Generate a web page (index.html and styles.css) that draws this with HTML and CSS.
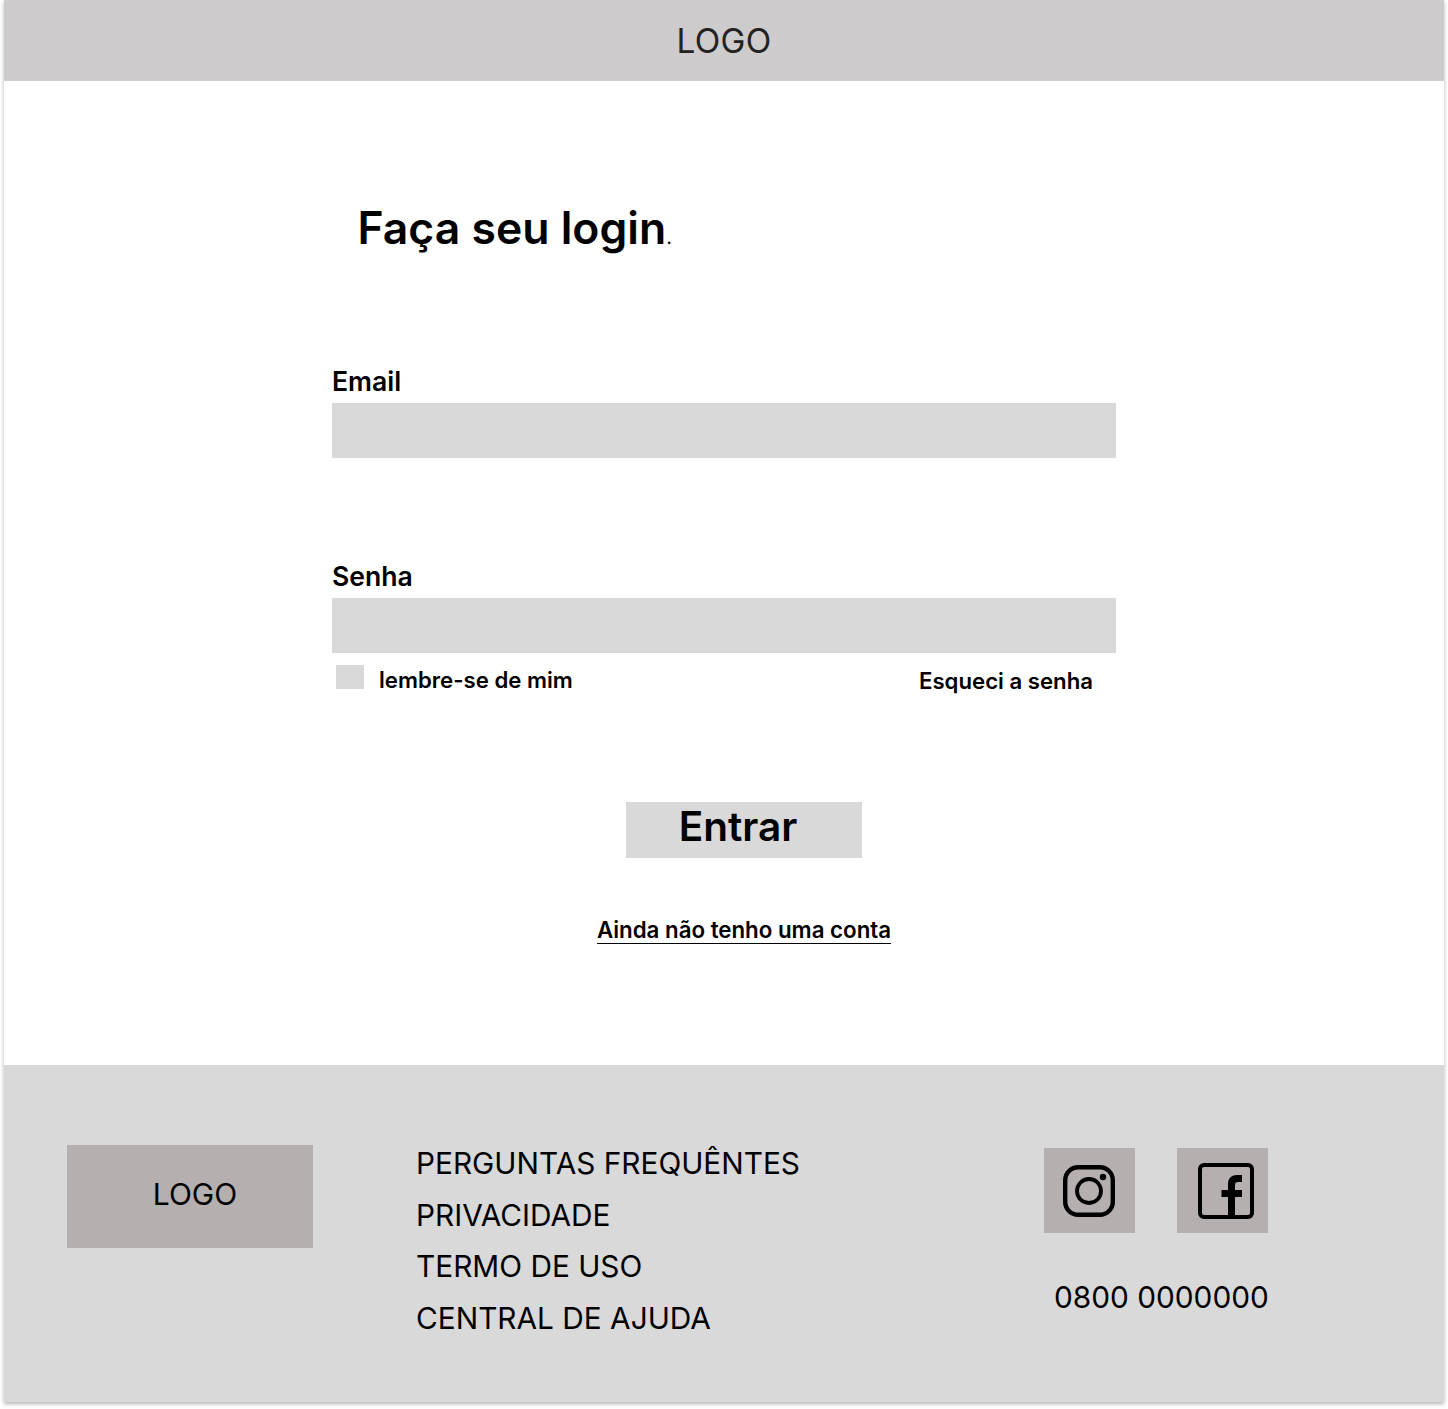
FILE: index.html
```html
<!DOCTYPE html>
<html lang="pt-BR">
<head>
    <meta charset="UTF-8">
    <title>Login</title>
    <link rel="stylesheet" href="styles.css">
</head>
<body>
    <div class="page">
        <header class="topbar">LOGO</header>

        <main class="content">
            <h1 class="title">Faça seu login<span class="dot">.</span></h1>

            <div class="field">
                <label class="field-label">Email</label>
                <div class="input"></div>
            </div>

            <div class="field field-senha">
                <label class="field-label">Senha</label>
                <div class="input"></div>
            </div>

            <div class="options">
                <div class="remember">
                    <span class="check"></span>
                    <span class="remember-text">lembre-se de mim</span>
                </div>
                <a class="forgot">Esqueci a senha</a>
            </div>

            <div class="actions">
                <button class="btn">Entrar</button>
                <a class="signup">Ainda não tenho uma conta</a>
            </div>
        </main>

        <footer class="footer">
            <div class="footer-logo">LOGO</div>
            <ul class="footer-links">
                <li>PERGUNTAS FREQUÊNTES</li>
                <li>PRIVACIDADE</li>
                <li>TERMO DE USO</li>
                <li>CENTRAL DE AJUDA</li>
            </ul>
            <div class="footer-contact">
                <div class="socials">
                    <div class="social">
                        <svg class="icon-insta" viewBox="0 0 52 52" width="52" height="52" fill="none" stroke="#000">
                            <rect x="2.2" y="2.2" width="47.6" height="47.6" rx="13" stroke-width="4.4"/>
                            <circle cx="26" cy="26" r="12" stroke-width="3.8"/>
                            <circle cx="40" cy="12" r="3.2" fill="#000" stroke="none"/>
                        </svg>
                    </div>
                    <div class="social">
                        <svg class="icon-fb" viewBox="0 0 56 56" width="56" height="56" fill="none">
                            <rect x="2" y="2" width="52" height="52" rx="4" stroke="#000" stroke-width="4"/>
                            <path d="M30 54V34h-6.5v-7H30v-6c0-6 4-9 9-9h5v7h-4c-2 0-3 1-3 3v5h7v7h-7v20z" fill="#000"/>
                        </svg>
                    </div>
                </div>
                <div class="phone">0800 0000000</div>
            </div>
        </footer>
    </div>
</body>
</html>
```

FILE: styles.css
```css
* {
    box-sizing: border-box;
}

body {
    margin: 0;
    padding-bottom: 7px;
    background: #fff;
    font-family: Inter, "Liberation Sans", sans-serif;
    color: #000;
}

.page {
    width: 1440px;
    height: 1402px;
    margin: 0 4px;
    display: flex;
    flex-direction: column;
    background: #fff;
    box-shadow: 0 2px 4px rgba(0, 0, 0, 0.3);
}

.topbar {
    height: 81px;
    background: #cdcbcb;
    display: flex;
    align-items: center;
    justify-content: center;
    font-size: 33.3px;
    letter-spacing: 0.3px;
    color: #222;
}

.content {
    flex: 1;
    width: 784px;
    margin: 0 auto;
}

.title {
    margin: 120px 0 0;
    padding-left: 25.5px;
    height: 54px;
    line-height: 54px;
    font-size: 44.5px;
    font-weight: 600;
}

.dot {
    font-size: 20px;
    font-weight: 400;
}

.field {
    margin-top: 109px;
}

.field-senha {
    margin-top: 101px;
}

.field-label {
    display: block;
    height: 39px;
    line-height: 34px;
    font-size: 26.6px;
    font-weight: 600;
}

.input {
    height: 55px;
    background: #d9d9d9;
}

.options {
    display: flex;
    justify-content: space-between;
    padding: 12px 23px 0 4px;
    font-size: 22.2px;
    font-weight: 600;
}

.remember {
    display: flex;
    gap: 15px;
}

.remember-text {
    margin-top: 1px;
}

.check {
    width: 28px;
    height: 24px;
    background: #d9d9d9;
}

.forgot {
    margin-top: 2px;
}

.actions {
    display: flex;
    flex-direction: column;
    align-items: center;
    margin-top: 108px;
    padding-left: 40px;
}

.btn {
    width: 236px;
    height: 56px;
    padding: 0 12px 12px 0;
    border: none;
    background: #d9d9d9;
    font-family: inherit;
    font-size: 40.5px;
    font-weight: 600;
    color: #000;
}

.signup {
    margin-top: 58px;
    font-size: 22.3px;
    font-weight: 600;
    border-bottom: 1px solid #000;
}

.footer {
    height: 337px;
    background: #d9d9d9;
    display: flex;
    padding: 80px 0 0 63px;
}

.footer-logo {
    width: 246px;
    height: 103px;
    background: #b5afaf;
    display: flex;
    align-items: center;
    justify-content: center;
    padding: 0 0 6px 10px;
    font-size: 30px;
    color: #000;
}

.footer-links {
    list-style: none;
    margin: -7px 0 0 103px;
    padding: 0;
    width: 628px;
    font-size: 29.8px;
    line-height: 51.7px;
    color: #000;
}

.footer-contact {
    width: 230px;
}

.socials {
    display: flex;
    gap: 42px;
    margin-top: 3px;
}

.social {
    width: 91px;
    height: 85px;
    background: #b5afaf;
    position: relative;
}

.icon-insta {
    position: absolute;
    left: 19px;
    top: 17px;
}

.icon-fb {
    position: absolute;
    left: 21px;
    top: 15px;
}

.phone {
    margin: 46px 0 0 10px;
    font-size: 29.8px;
    color: #000;
    white-space: nowrap;
}
```
